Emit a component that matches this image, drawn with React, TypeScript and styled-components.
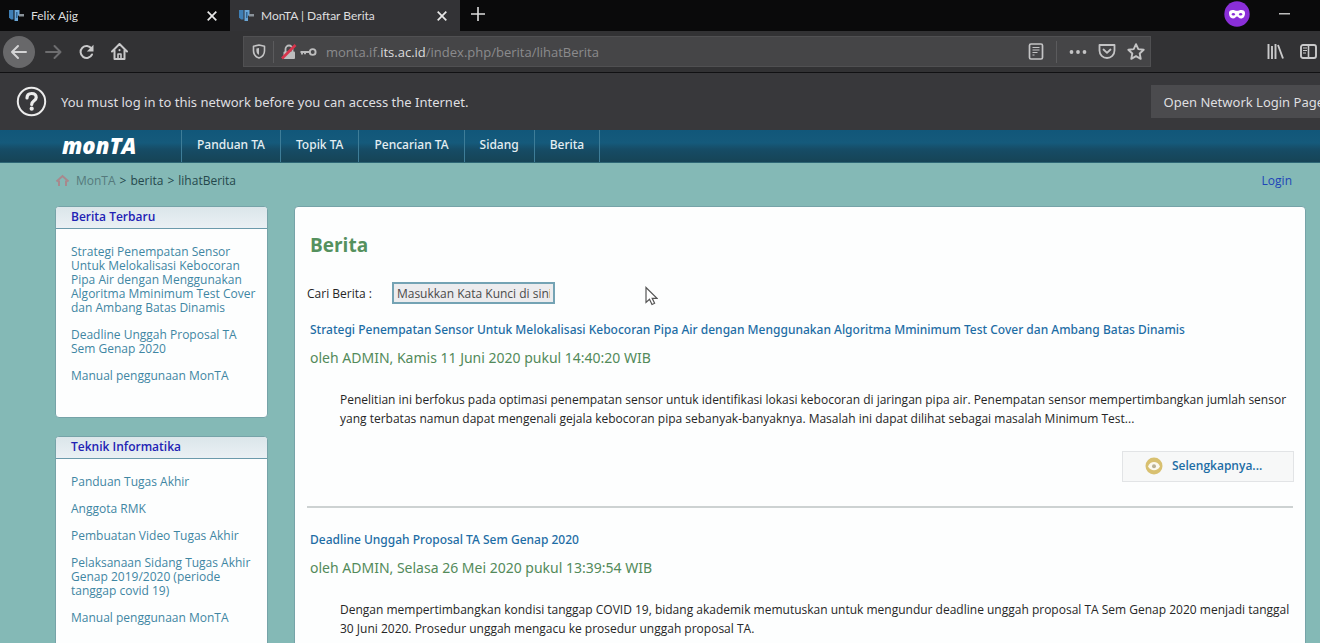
import React from "react";
import styled, { createGlobalStyle } from "styled-components";

const uiFont = `"Noto Sans", "Open Sans", sans-serif`;
const siteFont = `"Open Sans", "Noto Sans", sans-serif`;
const headingFont = `"Noto Sans", "Open Sans", sans-serif`;

const GlobalStyle = createGlobalStyle`
  *, *::before, *::after { box-sizing: border-box; }
  body {
    margin: 0;
    background: #84b9b6;
    font-family: ${siteFont};
    font-size: 12px;
    overflow: hidden;
  }
  h1, h2, h3, p, ul, ol { margin: 0; padding: 0; font-size: inherit; }
  ul, ol { list-style: none; }
  a { text-decoration: none; color: inherit; }
  button { border: 0; padding: 0; background: none; color: inherit; font: inherit; }
  svg { display: block; flex: none; }
`;

const Window = styled.div`
  height: 100vh;
  overflow: hidden;
`;

/* ---------- browser chrome ---------- */

const TabStrip = styled.div`
  display: flex;
  height: 31px;
  background: #0a0a0b;
  color: #dededf;
  font-family: Lato, ${uiFont};
  font-size: 12px;
`;

const Tab = styled.div<{ $active?: boolean }>`
  display: flex;
  align-items: center;
  width: 230px;
  padding: 0 10px 0 9px;
  background: ${(p) => (p.$active ? "#333336" : "transparent")};
`;

const TabTitle = styled.span`
  flex: 1;
  margin-left: 6px;
  white-space: nowrap;
`;

const TabButton = styled.button`
  display: grid;
  place-items: center;
  width: 16px;
  height: 16px;
`;

const NewTab = styled(TabButton)`
  width: 36px;
  height: 28px;
`;

const StripEnd = styled.div`
  display: flex;
  align-items: center;
  gap: 26px;
  margin-left: auto;
  padding: 0 28px 3px 0;
`;

const Toolbar = styled.div`
  display: flex;
  align-items: center;
  height: 42px;
  border-bottom: 1px solid #111113;
  background: #323234;
  color: #c9c9ca;
`;

const NavButtons = styled.div`
  display: flex;
  align-items: center;
  gap: 16px;
  width: 243px;
  padding-left: 3px;
`;

const ToolButton = styled.button<{ $dim?: boolean }>`
  display: grid;
  place-items: center;
  width: 17px;
  height: 32px;
  color: ${(p) => (p.$dim ? "#6d6d6f" : "inherit")};
`;

const BackButton = styled(ToolButton)`
  width: 32px;
  margin-right: -6px;
  border-radius: 50%;
  background: #68686a;
  color: #d4d4d5;
`;

const AddressBar = styled.div`
  display: flex;
  flex: 1;
  align-items: center;
  height: 31px;
  padding: 0 5px 0 8px;
  border: 1px solid #505052;
  background: #454547;
`;

const Divider = styled.span<{ $gap: number }>`
  width: 1px;
  height: 22px;
  margin: 0 ${(p) => p.$gap}px;
  background: #5b5b5d;
`;

const SiteState = styled.span`
  display: flex;
  align-items: center;
  gap: 3px;
`;

const Address = styled.span`
  flex: 1;
  margin-left: 9px;
  color: #8b8b8d;
  font-family: ${siteFont};
  font-size: 13px;
  white-space: nowrap;
`;

const Host = styled.span`
  color: #dcdcdd;
`;

const AddressActions = styled.div`
  display: flex;
  align-items: center;
  gap: 11px;
`;

const ToolbarEnd = styled.div`
  display: flex;
  align-items: center;
  justify-content: flex-end;
  gap: 16px;
  width: 169px;
  padding-right: 3px;
`;

const Notice = styled.div`
  display: flex;
  align-items: center;
  height: 57px;
  padding-left: 16px;
  background: #38383b;
  color: #dfdfe0;
  font-family: ${uiFont};
  font-size: 13px;
  white-space: nowrap;
`;

const NoticeText = styled.p`
  flex: 1;
  margin-left: 14px;
`;

const NoticeButton = styled.button`
  height: 33px;
  margin-right: -17px;
  padding: 0 13px;
  background: #4b4b4e;
`;

/* ---------- site ---------- */

const SiteNav = styled.nav`
  display: flex;
  height: 33px;
  border-bottom: 1px solid #2d6675;
  background: linear-gradient(#11577a, #155a7b 40%, #164c66 60%, #164456);
  color: #e4eef2;
`;

const Brand = styled.a`
  width: 181px;
  padding-left: 62px;
  color: #fff;
  font-size: 22px;
  font-style: italic;
  font-weight: 800;
  line-height: 31px;
`;

const Menu = styled.ul`
  display: flex;
  border-right: 1px solid #3e7d98;
`;

const MenuItem = styled.li`
  padding: 0 15px;
  border-left: 1px solid #3e7d98;
  font-family: ${headingFont};
  font-weight: 500;
  line-height: 29px;
`;

const Site = styled.div`
  padding: 0 14px 0 55px;
`;

const CrumbRow = styled.div`
  display: flex;
  align-items: center;
  justify-content: space-between;
  height: 34px;
  padding-right: 14px;
  color: #24484c;
`;

const Crumbs = styled.div`
  display: flex;
  align-items: center;
  gap: 4px;
`;

const CrumbHome = styled.a`
  display: flex;
  align-items: center;
  gap: 6px;
  color: #55797c;
`;

const LoginLink = styled.a`
  color: #1d45b8;
`;

const Columns = styled.div`
  display: grid;
  grid-template-columns: 213px minmax(0, 1fr);
  align-items: start;
  gap: 26px;
  margin-top: 9px;
`;

const Side = styled.aside`
  display: grid;
  gap: 18px;
`;

const Panel = styled.section`
  border: 1px solid #76a3a8;
  border-radius: 4px;
  background: #fdfefe;
`;

const PanelTitle = styled.h2`
  height: 22px;
  padding-left: 15px;
  border-bottom: 1px solid #6b9aab;
  border-radius: 3px 3px 0 0;
  background: linear-gradient(#dbe6ea, #eaf0f4);
  color: #2222b4;
  font-weight: 600;
  line-height: 19px;
`;

const PanelList = styled.ul`
  display: grid;
  gap: 13px;
  padding: 16px 0 34px 15px;
  color: #3f86a3;
  line-height: 14px;
  white-space: pre-line;
`;

const Main = styled.main`
  padding: 25px 12px 40px 12px;
  border: 1px solid #76a3a8;
  border-radius: 4px;
  background: #fdfefe;
  color: #262626;
`;

const PageTitle = styled.h1`
  padding-left: 3px;
  color: #55915e;
  font-size: 19px;
  font-weight: 700;
  line-height: 26px;
`;

const SearchRow = styled.form`
  display: flex;
  align-items: center;
  gap: 20px;
  margin: 24px 0 15px;
`;

const SearchInput = styled.input`
  width: 163px;
  height: 22px;
  padding: 0 3px;
  border: 2px solid #74a3b4;
  border-radius: 0;
  background: #ececee;
  color: #4a4a4a;
  font-family: ${siteFont};
  font-size: 12px;
`;

const Article = styled.article`
  padding-left: 3px;
`;

const ArticleTitle = styled.h2`
  color: #1d6da5;
  font-family: ${headingFont};
  font-weight: 500;
  line-height: 22px;
  white-space: nowrap;
`;

const Byline = styled.h3`
  margin-top: 6px;
  color: #538a5a;
  font-family: ${headingFont};
  font-size: 14px;
  font-weight: 400;
  line-height: 22px;
`;

const Summary = styled.p`
  margin: 21px 0 0 30px;
  line-height: 19px;
  white-space: pre;
`;

const MoreRow = styled.div`
  display: flex;
  justify-content: flex-end;
  margin: 23px -1px 24px 0;
`;

const MoreLink = styled.a`
  display: flex;
  align-items: center;
  gap: 9px;
  width: 172px;
  height: 31px;
  padding: 0 0 2px 22px;
  border: 1px solid #e2e4e6;
  background: #f7f8f8;
  color: #1d6da5;
  font-weight: 600;
`;

const Rule = styled.hr`
  height: 2px;
  margin: 0 0 21px;
  border: 0;
  background: #cdd2d2;
`;

const Pointer = styled.svg`
  position: absolute;
  top: 286px;
  left: 645px;
`;

/* ---------- icons ---------- */

const Favicon = () => (
  <svg width="16" height="14" viewBox="0 0 16 14">
    <path d="M0 1h4.500v9.500H2L0 8.500z" fill="#3f7fb5" />
    <path d="M5.500 1h5v5L9 7v5H5.500z" fill="#6aa6d6" />
    <rect x="7" y="3" width="1.500" height="6" fill="#2f6698" />
    <path d="M10 5h5v2.500h-5z" fill="#8a9299" />
  </svg>
);

const CloseIcon = () => (
  <svg width="10" height="10" viewBox="0 0 10 10" fill="none" stroke="#e8e8e8" strokeWidth="1.7">
    <path d="M.7.7l8.600 8.600M9.300.7L.7 9.300" />
  </svg>
);

const PlusIcon = () => (
  <svg width="14" height="14" viewBox="0 0 14 14" fill="none" stroke="#dcdcdc" strokeWidth="1.600">
    <path d="M7 0v14M0 7h14" />
  </svg>
);

const MaskIcon = () => (
  <svg width="26" height="26" viewBox="0 0 26 26">
    <circle cx="13" cy="13" r="12.700" fill="#8a2fd8" />
    <path
      fill="#fff"
      fillRule="evenodd"
      d="M5 12c0-2 1.300-3 3.500-3 2 0 3.200.8 4.500.8S15.500 9 17.500 9c2.200 0 3.500 1 3.500 3 0 3.300-1.500 5.500-4 5.500-2.200 0-2.800-2-4-2s-1.800 2-4 2c-2.500 0-4-2.200-4-5.500zm2.500 1.200c.5 1 1.200 1.400 2 1.400s1.400-.5 1.800-1.400c-.6-.8-1.200-1.200-2-1.200s-1.400.4-1.800 1.200zm7.200 0c.4.900 1 1.400 1.800 1.400s1.500-.4 2-1.400c-.4-.8-1-1.200-1.800-1.200s-1.400.4-2 1.200z"
    />
  </svg>
);

const MinimizeIcon = () => (
  <svg width="11" height="2" viewBox="0 0 11 2"><rect width="11" height="1.500" fill="#bdbdbd" /></svg>
);

const BackIcon = () => (
  <svg width="18" height="16" viewBox="0 0 18 16" fill="none" stroke="currentColor" strokeWidth="2" strokeLinecap="round" strokeLinejoin="round">
    <path d="M16 8H2M8 2L2 8l6 6" />
  </svg>
);

const ForwardIcon = () => (
  <svg width="17" height="16" viewBox="0 0 17 16" fill="none" stroke="currentColor" strokeWidth="2" strokeLinecap="round" strokeLinejoin="round">
    <path d="M1 8h14M9.500 2l6 6-6 6" />
  </svg>
);

const ReloadIcon = () => (
  <svg width="17" height="16" viewBox="0 0 17 16" fill="none" stroke="currentColor" strokeWidth="2">
    <path d="M13.500 4.500A6 6 0 1 0 14 10.500" strokeLinecap="round" />
    <path d="M15.500.8v6.700H8.800z" fill="currentColor" stroke="none" />
  </svg>
);

const HomeIcon = () => (
  <svg width="17" height="17" viewBox="0 0 17 17" fill="none" stroke="currentColor" strokeWidth="2" strokeLinecap="round" strokeLinejoin="round">
    <path d="M1 8.500L8.500 1 16 8.500M3.500 7.500V16h10V7.500" />
    <path d="M7 15.500v-4.500h3v4.500" strokeWidth="1.600" />
    <path d="M8.500 7v.2" />
  </svg>
);

const ShieldIcon = () => (
  <svg width="14" height="15" viewBox="0 0 14 15" fill="none" stroke="#c4c4c5" strokeWidth="1.600" strokeLinejoin="round">
    <path d="M7 1l5.500 1.300v4.500c0 3.500-2 6-5.500 7.200-3.500-1.200-5.500-3.700-5.500-7.200V2.300z" />
    <path d="M7 4v6.800C5.300 10 4.400 8.600 4.400 6.700V4.500z" fill="#c4c4c5" stroke="none" />
  </svg>
);

const InsecureIcon = () => (
  <svg width="16" height="16" viewBox="0 0 16 16" fill="none">
    <path d="M4.500 8V5a3.500 3.500 0 0 1 7 0v3" stroke="#bdbdbe" strokeWidth="1.800" />
    <rect x="2.500" y="7.500" width="11.500" height="7.500" rx="1" fill="#bdbdbe" />
    <path d="M1 14.500L14.500 1" stroke="#d8354c" strokeWidth="2.600" />
  </svg>
);

const KeyIcon = () => (
  <svg width="17" height="8" viewBox="0 0 17 8" fill="none" stroke="#bdbdbe" strokeWidth="1.900">
    <circle cx="12.700" cy="4" r="2.900" />
    <path d="M9.800 4H.5M2 4v2.500M5 4v2.200" />
  </svg>
);

const ReaderIcon = () => (
  <svg width="16" height="17" viewBox="0 0 16 17" fill="none" stroke="#c4c4c5">
    <rect x="1.500" y="1" width="13" height="15" rx="1.500" strokeWidth="1.700" />
    <path d="M4.500 4.500h7M4.500 7h7M4.500 9.500h5M4.500 12h2" strokeWidth="1.200" />
  </svg>
);

const DotsIcon = () => (
  <svg width="18" height="4" viewBox="0 0 18 4" fill="#c4c4c5">
    <circle cx="2.500" cy="2" r="1.900" /><circle cx="9" cy="2" r="1.900" /><circle cx="15.500" cy="2" r="1.900" />
  </svg>
);

const PocketIcon = () => (
  <svg width="18" height="15" viewBox="0 0 18 15" fill="none" stroke="#c4c4c5" strokeWidth="1.800" strokeLinecap="round" strokeLinejoin="round">
    <path d="M1.500 1h15v5.500a7.500 7.500 0 0 1-15 0z" />
    <path d="M5.500 5.500L9 8.800l3.500-3.300" />
  </svg>
);

const StarIcon = () => (
  <svg width="18" height="17" viewBox="0 0 18 17" fill="none" stroke="#c4c4c5" strokeWidth="1.900" strokeLinejoin="round">
    <path d="M9 1.200l2.300 4.900 5.400.7-4 3.700 1 5.300L9 13.200l-4.700 2.600 1-5.300-4-3.700 5.400-.7z" />
  </svg>
);

const LibraryIcon = () => (
  <svg width="17" height="15" viewBox="0 0 17 15" fill="none" stroke="currentColor" strokeWidth="1.900">
    <path d="M1.500 0v15M5 2v13M8.500 0v15M11 1l5 13.500" />
  </svg>
);

const SidebarIcon = () => (
  <svg width="17" height="15" viewBox="0 0 17 15" fill="none" stroke="currentColor">
    <rect x="1" y="1" width="15" height="13" rx="2" strokeWidth="1.900" />
    <path d="M8.500 1v13" strokeWidth="1.600" />
    <path d="M3 4h4M3 6.500h4M3 9h3" strokeWidth="1.200" />
  </svg>
);

const QuestionIcon = () => (
  <svg width="31" height="31" viewBox="0 0 31 31" fill="none" stroke="#ececec">
    <circle cx="15.500" cy="15.500" r="13.700" strokeWidth="2" />
    <path d="M11 12c0-2.900 1.900-4.500 4.600-4.500s4.600 1.500 4.600 4c0 3.400-4.500 3.300-4.500 7" strokeWidth="3.200" strokeLinecap="round" />
    <circle cx="15.700" cy="22.700" r="2.100" fill="#ececec" stroke="none" />
  </svg>
);

const CrumbHomeIcon = () => (
  <svg width="15" height="12" viewBox="0 0 15 12" fill="none" stroke="#a8898d" strokeWidth="2">
    <path d="M1.500 7.500l6-5.500 6 5.500" />
    <path d="M4 6.500V12M11 6.500V12" />
  </svg>
);

const EyeIcon = () => (
  <svg width="18" height="18" viewBox="0 0 18 18">
    <circle cx="9" cy="9" r="8.500" fill="#d8c070" />
    <path d="M3 9.500C4.200 6.300 6.500 5 9 5s4.800 1.300 6 4.500c-1.500 2.500-3.500 3.700-6 3.700s-4.500-1.200-6-3.700z" fill="#fbf8ee" />
    <circle cx="9" cy="9.300" r="2" fill="#b9b094" />
  </svg>
);

/* ---------- content ---------- */

const menu = ["Panduan TA", "Topik TA", "Pencarian TA", "Sidang", "Berita"];

const panels = [
  {
    title: "Berita Terbaru",
    items: [
      "Strategi Penempatan Sensor\nUntuk Melokalisasi Kebocoran\nPipa Air dengan Menggunakan\nAlgoritma Mminimum Test Cover\ndan Ambang Batas Dinamis",
      "Deadline Unggah Proposal TA\nSem Genap 2020",
      "Manual penggunaan MonTA",
    ],
  },
  {
    title: "Teknik Informatika",
    items: [
      "Panduan Tugas Akhir",
      "Anggota RMK",
      "Pembuatan Video Tugas Akhir",
      "Pelaksanaan Sidang Tugas Akhir\nGenap 2019/2020 (periode\ntanggap covid 19)",
      "Manual penggunaan MonTA",
    ],
  },
];

const articles = [
  {
    title:
      "Strategi Penempatan Sensor Untuk Melokalisasi Kebocoran Pipa Air dengan Menggunakan Algoritma Mminimum Test Cover dan Ambang Batas Dinamis",
    byline: "oleh ADMIN, Kamis 11 Juni 2020 pukul 14:40:20 WIB",
    summary:
      "Penelitian ini berfokus pada optimasi penempatan sensor untuk identifikasi lokasi kebocoran di jaringan pipa air. Penempatan sensor mempertimbangkan jumlah sensor\nyang terbatas namun dapat mengenali gejala kebocoran pipa sebanyak-banyaknya. Masalah ini dapat dilihat sebagai masalah Minimum Test...",
  },
  {
    title: "Deadline Unggah Proposal TA Sem Genap 2020",
    byline: "oleh ADMIN, Selasa 26 Mei 2020 pukul 13:39:54 WIB",
    summary:
      "Dengan mempertimbangkan kondisi tanggap COVID 19, bidang akademik memutuskan untuk mengundur deadline unggah proposal TA Sem Genap 2020 menjadi tanggal\n30 Juni 2020. Prosedur unggah mengacu ke prosedur unggah proposal TA.",
  },
];

const BrowserTab = ({ title, active }: { title: string; active?: boolean }) => (
  <Tab $active={active}>
    <Favicon />
    <TabTitle>{title}</TabTitle>
    <TabButton aria-label="Close tab"><CloseIcon /></TabButton>
  </Tab>
);

export default function App() {
  return (
    <Window>
      <GlobalStyle />
      <TabStrip>
        <BrowserTab title="Felix Ajig" />
        <BrowserTab title="MonTA | Daftar Berita" active />
        <NewTab aria-label="New tab"><PlusIcon /></NewTab>
        <StripEnd>
          <MaskIcon />
          <TabButton aria-label="Minimize"><MinimizeIcon /></TabButton>
        </StripEnd>
      </TabStrip>

      <Toolbar>
        <NavButtons>
          <BackButton aria-label="Back"><BackIcon /></BackButton>
          <ToolButton aria-label="Forward" $dim><ForwardIcon /></ToolButton>
          <ToolButton aria-label="Reload"><ReloadIcon /></ToolButton>
          <ToolButton aria-label="Home"><HomeIcon /></ToolButton>
        </NavButtons>
        <AddressBar>
          <ShieldIcon />
          <Divider $gap={7} />
          <SiteState>
            <InsecureIcon />
            <KeyIcon />
          </SiteState>
          <Address>monta.if.<Host>its.ac.id</Host>/index.php/berita/lihatBerita</Address>
          <ReaderIcon />
          <Divider $gap={12} />
          <AddressActions>
            <DotsIcon />
            <PocketIcon />
            <StarIcon />
          </AddressActions>
        </AddressBar>
        <ToolbarEnd>
          <ToolButton aria-label="Library"><LibraryIcon /></ToolButton>
          <ToolButton aria-label="Sidebars"><SidebarIcon /></ToolButton>
        </ToolbarEnd>
      </Toolbar>

      <Notice>
        <QuestionIcon />
        <NoticeText>You must log in to this network before you can access the Internet.</NoticeText>
        <NoticeButton>Open Network Login Page</NoticeButton>
      </Notice>

      <SiteNav>
        <Brand href="#">monTA</Brand>
        <Menu>
          {menu.map((label) => (
            <MenuItem key={label}><a href="#">{label}</a></MenuItem>
          ))}
        </Menu>
      </SiteNav>

      <Site>
        <CrumbRow>
          <Crumbs>
            <CrumbHome href="#"><CrumbHomeIcon />MonTA</CrumbHome>
            <span>&gt;</span>
            <a href="#">berita</a>
            <span>&gt;</span>
            <a href="#">lihatBerita</a>
          </Crumbs>
          <LoginLink href="#">Login</LoginLink>
        </CrumbRow>

        <Columns>
          <Side>
            {panels.map((panel) => (
              <Panel key={panel.title}>
                <PanelTitle>{panel.title}</PanelTitle>
                <PanelList>
                  {panel.items.map((item) => (
                    <li key={item}><a href="#">{item}</a></li>
                  ))}
                </PanelList>
              </Panel>
            ))}
          </Side>

          <Main>
            <PageTitle>Berita</PageTitle>
            <SearchRow>
              <label htmlFor="keyword">Cari Berita :</label>
              <SearchInput id="keyword" defaultValue="Masukkan Kata Kunci di sini" />
            </SearchRow>
            {articles.map((article) => (
              <React.Fragment key={article.title}>
                <Article>
                  <ArticleTitle><a href="#">{article.title}</a></ArticleTitle>
                  <Byline>{article.byline}</Byline>
                  <Summary>{article.summary}</Summary>
                  <MoreRow>
                    <MoreLink href="#"><EyeIcon />Selengkapnya...</MoreLink>
                  </MoreRow>
                </Article>
                <Rule />
              </React.Fragment>
            ))}
          </Main>
        </Columns>
      </Site>

      <Pointer width="13" height="20" viewBox="0 0 13 20" fill="#fff" stroke="#555" strokeWidth="1.200">
        <path d="M1 1.500v15l3.500-3.200 2.500 5.200 2.600-1.200-2.400-5H12z" />
      </Pointer>
    </Window>
  );
}
